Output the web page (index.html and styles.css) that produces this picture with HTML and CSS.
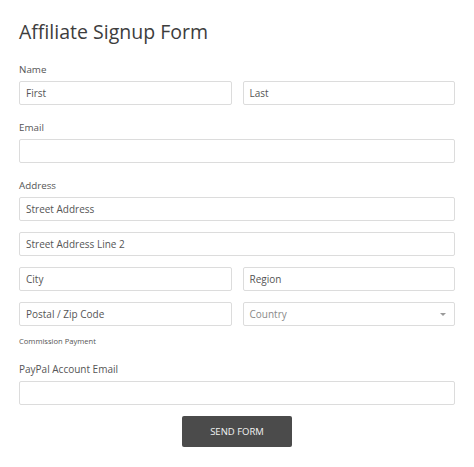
FILE: index.html
```html
<!DOCTYPE html>
<html lang="en">
<head>
<meta charset="utf-8">
<title>Affiliate Signup Form</title>
<link rel="stylesheet" href="styles.css">
</head>
<body>
<form class="form">
  <h1 class="title">Affiliate Signup Form</h1>

  <div class="field field-first">
    <label class="label">Name</label>
    <div class="row">
      <div class="input">First</div>
      <div class="input">Last</div>
    </div>
  </div>

  <div class="field">
    <label class="label">Email</label>
    <div class="input"></div>
  </div>

  <div class="field">
    <label class="label">Address</label>
    <div class="stack">
      <div class="input">Street Address</div>
      <div class="input">Street Address Line 2</div>
      <div class="row">
        <div class="input">City</div>
        <div class="input">Region</div>
      </div>
      <div class="row">
        <div class="input">Postal / Zip Code</div>
        <div class="input select"><span>Country</span><span class="caret"></span></div>
      </div>
    </div>
  </div>

  <p class="section">Commission Payment</p>

  <div class="field field-paypal">
    <label class="label label-lg">PayPal Account Email</label>
    <div class="input"></div>
  </div>

  <div class="actions">
    <button type="button" class="btn">SEND FORM</button>
  </div>
</form>
</body>
</html>
```

FILE: styles.css
```css
* { box-sizing: border-box; }

html, body {
  margin: 0;
  padding: 0;
  background: #ffffff;
}

body {
  font-family: "Open Sans", "Liberation Sans", sans-serif;
  color: #555555;
}

.form {
  padding: 18px 19px 0 19px;
}

.title {
  margin: 0;
  font-size: 19.5px;
  line-height: 28px;
  font-weight: 400;
  color: #3d3d3d;
}

.field {
  margin-top: 16px;
}

.field-first {
  margin-top: 17px;
}

.label {
  display: block;
  font-size: 9.8px;
  line-height: 14px;
  color: #555555;
  margin-bottom: 4px;
}

.label-lg {
  font-size: 10px;
  margin-bottom: 5px;
}

.row {
  display: grid;
  grid-template-columns: 1fr 1fr;
  column-gap: 11px;
}

.stack {
  display: flex;
  flex-direction: column;
  gap: 11px;
}

.input {
  height: 24px;
  border: 1px solid #dcdcdc;
  border-radius: 2px;
  background: #ffffff;
  padding: 0 6px;
  font-size: 10px;
  line-height: 22px;
  color: #555555;
  white-space: nowrap;
}

.select {
  display: flex;
  align-items: center;
  justify-content: space-between;
  color: #8a8a8a;
  padding-right: 8px;
}

.caret {
  width: 0;
  height: 0;
  border-left: 3px solid transparent;
  border-right: 3px solid transparent;
  border-top: 3px solid #9a9a9a;
}

.section {
  margin: 10px 0 0 0;
  font-size: 7.6px;
  line-height: 11px;
  color: #555555;
}

.field-paypal {
  margin-top: 15px;
}

.actions {
  display: flex;
  justify-content: center;
  margin-top: 11px;
}

.btn {
  width: 110px;
  height: 31px;
  border: none;
  border-radius: 2px;
  background: #4b4b4b;
  color: #f2f2f2;
  font-family: "Open Sans", "Liberation Sans", sans-serif;
  font-size: 9.5px;
  letter-spacing: 0;
  padding: 0;
}
```
